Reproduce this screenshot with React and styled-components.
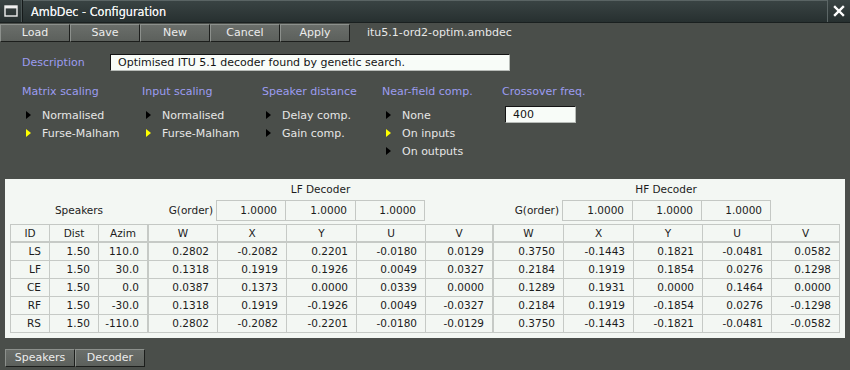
import React from 'react';
import styled, { createGlobalStyle } from 'styled-components';

const GlobalStyle = createGlobalStyle`
  html, body {
    margin: 0;
    padding: 0;
    background: #4a4e4a;
  }
  body {
    font-family: "DejaVu Sans", "Liberation Sans", sans-serif;
    font-size: 11px;
  }
`;

const Window = styled.div`
  width: 850px;
  height: 370px;
  background: #4a4e4a;
  display: flex;
  flex-direction: column;
  overflow: hidden;
`;

const TitleBar = styled.div`
  height: 23px;
  display: flex;
  background: linear-gradient(#3a4444, #273030);
  border-bottom: 1px solid #1a2020;
  box-sizing: border-box;
`;

const TitleIcon = styled.div`
  width: 22px;
  display: flex;
  align-items: center;
  justify-content: center;
  border-right: 1px solid #151a1a;
  box-shadow: inset -1px 0 0 #4c5656;
`;

const Title = styled.div`
  flex: 1;
  padding-left: 8px;
  color: #f0f0f0;
  font-family: "DejaVu Sans Condensed", "DejaVu Sans", sans-serif;
  font-size: 12.5px;
  line-height: 22px;
  border-top: 1px solid #5a6464;
  text-shadow: 0 0 0.4px #f0f0f0;
`;

const CloseBox = styled.div`
  width: 22px;
  display: flex;
  align-items: center;
  justify-content: center;
  border-left: 1px solid #5c6666;
`;

const Toolbar = styled.div`
  height: 19px;
  display: flex;
  align-items: flex-end;
`;

const Button = styled.button`
  width: ${p => p.$w || 70}px;
  height: 18px;
  padding: 0;
  margin: 0;
  box-sizing: border-box;
  background: linear-gradient(#6a6e6a, #5c605c);
  border: 1px solid #1c1e1c;
  border-top-color: #8c908c;
  border-left-color: #8c908c;
  color: #ececec;
  font-family: "DejaVu Sans", sans-serif;
  font-size: 11px;
  line-height: 16px;
`;

const FileName = styled.div`
  margin-left: 17px;
  color: #e8e8e8;
  line-height: 18px;
`;

const Main = styled.div`
  padding-left: 22px;
`;

const DescRow = styled.div`
  display: flex;
  align-items: center;
  margin-top: 12px;
  height: 17px;
`;

const Label = styled.div`
  color: #9c9cf0;
  width: ${p => (p.$w ? `${p.$w}px` : 'auto')};
  height: 14px;
  line-height: 14px;
`;

const TextInput = styled.div`
  width: ${p => p.$w}px;
  height: ${p => p.$h}px;
  box-sizing: border-box;
  background: #f8fcf8;
  border: 1px solid #b8bcb8;
  border-top-color: #141414;
  border-left-color: #141414;
  color: #141414;
  padding-left: ${p => p.$pad}px;
  line-height: ${p => p.$h - 2}px;
  margin-left: ${p => p.$ml || 0}px;
`;

const Settings = styled.div`
  display: grid;
  grid-template-columns: repeat(5, 120px);
  margin-top: 14px;
  height: 94px;
`;

const Group = styled.div`
  display: flex;
  flex-direction: column;
`;

const Options = styled.div`
  margin-top: 7px;
`;

const Option = styled.div`
  height: 18px;
  display: flex;
  align-items: center;
  color: #e6e6e6;
`;

const Arrow = styled.span`
  width: 0;
  height: 0;
  margin-left: 4px;
  margin-right: 11px;
  border-top: 4.5px solid transparent;
  border-bottom: 4.5px solid transparent;
  border-left: 5px solid ${p => (p.$on ? '#ffff00' : '#000')};
`;

const Panel = styled.div`
  margin: 0 5px;
  height: 159px;
  background: #f3f7f3;
  padding-left: 5px;
  box-sizing: border-box;
  color: #1c1c1c;
  font-size: 10.5px;
`;

const cols = '39px 49px 50px 69px 69px 70px 69px 68px 70px 70px 69px 69px 68px';

const HeadGrid = styled.div`
  display: grid;
  grid-template-columns: ${cols};
  grid-template-rows: 21px 21px;
  margin-bottom: 3px;
`;

const Heading = styled.div`
  grid-column: ${p => p.$col};
  grid-row: 1;
  text-align: center;
  line-height: 20px;
`;

const SpkLabel = styled.div`
  grid-column: 1 / span 3;
  grid-row: 2;
  text-align: center;
  line-height: 20px;
`;

const GLabel = styled.div`
  grid-column: ${p => p.$col};
  grid-row: 2;
  text-align: right;
  padding-right: 4px;
  line-height: 20px;
`;

const GBox = styled.div`
  grid-row: 2;
  border: 1px solid #c4c8c4;
  margin-left: -1px;
  text-align: right;
  padding-right: 8px;
  line-height: 19px;
`;

const Table = styled.div`
  display: grid;
  grid-template-columns: ${cols};
  grid-auto-rows: 18px;
  width: 829px;
  border: 1px solid #c4c8c4;
  border-right: none;
  border-bottom: none;
`;

const Cell = styled.div`
  border-right: ${p => (p.$sep ? '2px' : '1px')} solid #c6cac6;
  border-bottom: ${p => (p.$head ? '2px' : '1px')} solid #c6cac6;
  box-sizing: border-box;
  text-align: ${p => (p.$head ? 'center' : 'right')};
  padding-right: ${p => (p.$head ? 0 : 8)}px;
  line-height: 17px;
  white-space: nowrap;
`;

const Tabs = styled.div`
  display: flex;
  margin: 11px 0 0 5px;
`;

const WindowIcon = () => (
  <svg width="14" height="12" viewBox="0 0 14 12">
    <rect x="1" y="1" width="12" height="10" fill="none" stroke="#f0f0f0" strokeWidth="1.4" />
    <rect x="1" y="1" width="12" height="2.4" fill="#f0f0f0" />
  </svg>
);

const CloseIcon = () => (
  <svg width="12" height="12" viewBox="0 0 12 12">
    <path d="M2 2 L10 10 M10 2 L2 10" stroke="#ffffff" strokeWidth="2.4" strokeLinecap="square" />
  </svg>
);

const groups = [
  { title: 'Matrix scaling', opts: ['Normalised', 'Furse-Malham'], on: 1 },
  { title: 'Input scaling', opts: ['Normalised', 'Furse-Malham'], on: 1 },
  { title: 'Speaker distance', opts: ['Delay comp.', 'Gain comp.'], on: -1 },
  { title: 'Near-field comp.', opts: ['None', 'On inputs', 'On outputs'], on: 1 },
];

const heads = ['ID', 'Dist', 'Azim', 'W', 'X', 'Y', 'U', 'V', 'W', 'X', 'Y', 'U', 'V'];

const rows = [
  ['LS', '1.50', '110.0', '0.2802', '-0.2082', '0.2201', '-0.0180', '0.0129', '0.3750', '-0.1443', '0.1821', '-0.0481', '0.0582'],
  ['LF', '1.50', '30.0', '0.1318', '0.1919', '0.1926', '0.0049', '0.0327', '0.2184', '0.1919', '0.1854', '0.0276', '0.1298'],
  ['CE', '1.50', '0.0', '0.0387', '0.1373', '0.0000', '0.0339', '0.0000', '0.1289', '0.1931', '0.0000', '0.1464', '0.0000'],
  ['RF', '1.50', '-30.0', '0.1318', '0.1919', '-0.1926', '0.0049', '-0.0327', '0.2184', '0.1919', '-0.1854', '0.0276', '-0.1298'],
  ['RS', '1.50', '-110.0', '0.2802', '-0.2082', '-0.2201', '-0.0180', '-0.0129', '0.3750', '-0.1443', '-0.1821', '-0.0481', '-0.0582'],
];

export default function App() {
  return (
    <Window>
      <GlobalStyle />
      <TitleBar>
        <TitleIcon><WindowIcon /></TitleIcon>
        <Title>AmbDec - Configuration</Title>
        <CloseBox><CloseIcon /></CloseBox>
      </TitleBar>
      <Toolbar>
        {['Load', 'Save', 'New', 'Cancel', 'Apply'].map(b => (
          <Button key={b}>{b}</Button>
        ))}
        <FileName>itu5.1-ord2-optim.ambdec</FileName>
      </Toolbar>
      <Main>
        <DescRow>
          <Label $w={88}>Description</Label>
          <TextInput $w={400} $h={17} $pad={7}>Optimised ITU 5.1 decoder found by genetic search.</TextInput>
        </DescRow>
        <Settings>
          {groups.map(g => (
            <Group key={g.title}>
              <Label>{g.title}</Label>
              <Options>
                {g.opts.map((o, i) => (
                  <Option key={o}>
                    <Arrow $on={i === g.on} />
                    {o}
                  </Option>
                ))}
              </Options>
            </Group>
          ))}
          <Group>
            <Label>Crossover freq.</Label>
            <Options>
              <TextInput $w={71} $h={17} $pad={7} $ml={3}>400</TextInput>
            </Options>
          </Group>
        </Settings>
      </Main>
      <Panel>
        <HeadGrid>
          <Heading $col="4 / span 5">LF Decoder</Heading>
          <Heading $col="9 / span 5">HF Decoder</Heading>
          <SpkLabel>Speakers</SpkLabel>
          <GLabel $col={4}>G(order)</GLabel>
          <GBox style={{ gridColumn: 5 }}>1.0000</GBox>
          <GBox style={{ gridColumn: 6 }}>1.0000</GBox>
          <GBox style={{ gridColumn: 7 }}>1.0000</GBox>
          <GLabel $col={9}>G(order)</GLabel>
          <GBox style={{ gridColumn: 10 }}>1.0000</GBox>
          <GBox style={{ gridColumn: 11 }}>1.0000</GBox>
          <GBox style={{ gridColumn: 12 }}>1.0000</GBox>
        </HeadGrid>
        <Table>
          {heads.map((h, i) => (
            <Cell key={`h${i}`} $head $sep={i === 2 || i === 7}>{h}</Cell>
          ))}
          {rows.map(r =>
            r.map((v, i) => (
              <Cell key={`${r[0]}${i}`} $sep={i === 2 || i === 7}>{v}</Cell>
            ))
          )}
        </Table>
      </Panel>
      <Tabs>
        <Button>Speakers</Button>
        <Button>Decoder</Button>
      </Tabs>
    </Window>
  );
}
